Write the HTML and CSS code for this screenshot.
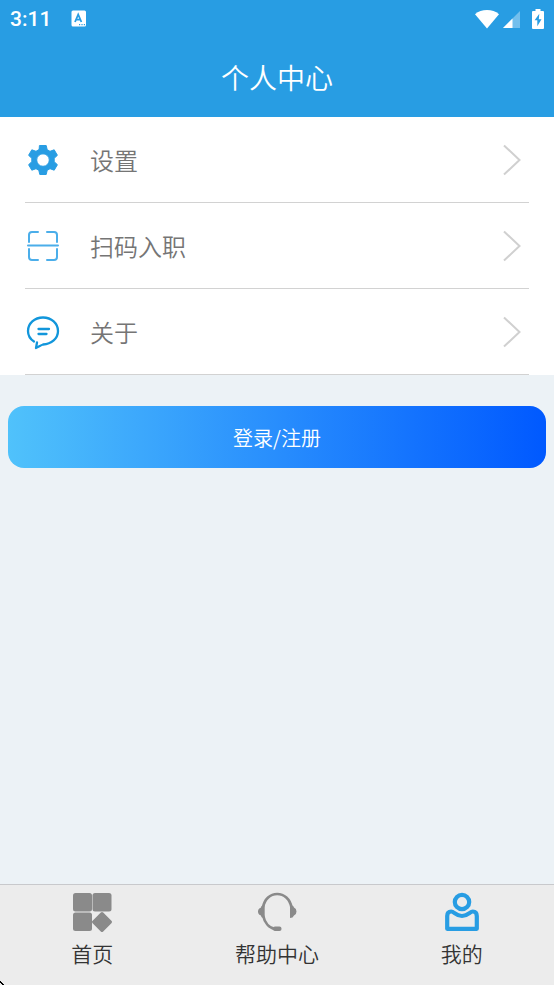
FILE: index.html
```html
<!DOCTYPE html>
<html lang="zh-CN">
<head>
<meta charset="utf-8">
<meta name="viewport" content="width=device-width, initial-scale=1">
<title>个人中心</title>
<link rel="stylesheet" href="styles.css">
</head>
<body>
<header class="header">
  <div class="status">
    <span class="clock">3:11</span>
    <svg class="status-app" width="16" height="18" viewBox="0 0 16 18" aria-hidden="true">
      <rect x="0.5" y="0.5" width="14.5" height="16" rx="1.5" fill="#fff"/>
      <path d="M4 12 7.2 4.5 10.4 12M5.2 9.6h4" fill="none" stroke="#289de3" stroke-width="1.8"/>
      <path d="M8 14.6h1.2M10.4 14.6h1.2M12.8 14.6h1.2" stroke="#289de3" stroke-width="1.2"/>
    </svg>
    <div class="status-right">
      <svg width="24" height="19" viewBox="0 0 24 19" aria-hidden="true"><path d="M0 4.2Q5 0 12 0t12 4.2L12 18.5z" fill="#fff"/></svg>
      <svg width="17" height="17" viewBox="0 0 17 17" aria-hidden="true"><path d="M17 0v17H0z" fill="#fff" opacity=".35"/><path d="M9.5 7.5V17H0z" fill="#fff"/></svg>
      <svg class="battery" width="12" height="20" viewBox="0 0 12 20" aria-hidden="true"><path d="M3.5 2V0h5v2H11q1 0 1 1v16q0 1-1 1H1q-1 0-1-1V3q0-1 1-1z" fill="#fff"/><path d="M7.3 4.800 2.600 11.300h2.700v5.900l4.200-7H6.800z" fill="#289de3"/></svg>
    </div>
  </div>
  <h1 class="title">个人中心</h1>
</header>
<main class="main">
  <nav class="menu">
    <a class="row" href="#settings">
      <svg class="row-icon" width="36" height="36" viewBox="0 0 36 36" aria-hidden="true"><path class="gear" d="M14.800 3.500h6.400l1 4.200 2.800 1.600 4.200-1.500 3.200 5.500-3.200 3v3.400l3.200 3-3.200 5.500-4.200-1.500-2.800 1.600-1 4.200h-6.400l-1-4.200-2.800-1.600-4.200 1.500-3.200-5.500 3.200-3v-3.400l-3.200-3 3.200-5.500 4.200 1.500 2.800-1.600zM18 11.700a6.300 6.300 0 1 0 0 12.600 6.300 6.300 0 0 0 0-12.600z"/></svg>
      <span class="row-label">设置</span>
      <svg class="chevron" width="20" height="32" viewBox="0 0 20 32" aria-hidden="true"><path d="M2 1.500 17.500 16 2 30.500"/></svg>
    </a>
    <a class="row" href="#scan">
      <svg class="row-icon scan" width="36" height="36" viewBox="0 0 36 36" aria-hidden="true"><path d="M4 14V7q0-3 3-3h6M22 4h7q3 0 3 3v7M4 21v8q0 3 3 3h6M22 32h7q3 0 3-3v-8M3 17.500h30"/></svg>
      <span class="row-label">扫码入职</span>
      <svg class="chevron" width="20" height="32" viewBox="0 0 20 32" aria-hidden="true"><path d="M2 1.500 17.500 16 2 30.500"/></svg>
    </a>
    <a class="row" href="#about">
      <svg class="row-icon about" width="36" height="36" viewBox="0 0 36 36" aria-hidden="true"><path d="M9 27.500C5 25 3 21.500 3 17 3 9.500 9.500 3.500 18 3.500S33 9.500 33 17 26.500 30 18 30.500c-2 .5-4.500 2.500-7 3.500l1-5.500M13.500 15H24M13.500 20h8"/></svg>
      <span class="row-label">关于</span>
      <svg class="chevron" width="20" height="32" viewBox="0 0 20 32" aria-hidden="true"><path d="M2 1.500 17.500 16 2 30.500"/></svg>
    </a>
  </nav>
  <button class="login" type="button">登录/注册</button>
</main>
<nav class="tabs">
  <a class="tab" href="#home">
    <svg width="40" height="40" viewBox="0 0 40 40" fill="#8a8a8a" aria-hidden="true"><rect x="1" y="1" width="19" height="18.500" rx="2.500"/><rect x="20.500" y="1" width="19" height="18.500" rx="2.500"/><rect x="1" y="20.500" width="19" height="18.500" rx="2.500"/><path d="M28.800 20.600q1.200-1.200 2.400 0l8.200 8.200q1.200 1.200 0 2.400l-8.200 8.200q-1.200 1.200-2.400 0l-8.200-8.200q-1.200-1.200 0-2.400z"/></svg>
    <span>首页</span>
  </a>
  <a class="tab" href="#help">
    <svg width="40" height="40" viewBox="0 0 40 40" aria-hidden="true"><path d="M34.500 15.500C33 7 27 2 20.200 2S7.500 7 6 15.500V23C7.500 30.500 12 36 18 37" fill="none" stroke="#8a8a8a" stroke-width="2.700"/><path d="M7.500 13v13q-3.500 0-3.500-2.500-3-1-3-4t3-4Q4 13 7.500 13zM33 13q3.500 0 4 2.500 2.500 1 2.500 4T37 23.500Q36 26 33 26z" fill="#8a8a8a"/><rect x="16" y="34.500" width="8.500" height="4.500" rx="2" fill="#8a8a8a"/></svg>
    <span>帮助中心</span>
  </a>
  <a class="tab" href="#mine" aria-current="page">
    <svg width="40" height="40" viewBox="0 0 40 40" fill="none" stroke="#289de3" stroke-width="4.200" aria-hidden="true"><circle cx="20" cy="10" r="7.200"/><path stroke-linejoin="round" d="M5.200 36.800V24q0-4.500 4-4.500c3 0 4.500 4.500 10.800 4.500s7.800-4.500 10.800-4.500q4 0 4 4.500v12.800z"/></svg>
    <span>我的</span>
  </a>
</nav>
<svg class="corner" width="4" height="4" viewBox="0 0 4 4" aria-hidden="true"><path d="M0 0h1v1h1v1h1v1h1v1H2V3H1V2H0z"/></svg>
</body>
</html>
```
FILE: styles.css
```css
* {
  box-sizing: border-box;
}

body {
  margin: 0;
  min-height: 100vh;
  display: flex;
  flex-direction: column;
  background: #ecf2f6;
  font-family: "Noto Sans CJK SC", sans-serif;
  font-weight: 350;
}

a {
  color: inherit;
  text-decoration: none;
}

svg {
  display: block;
  flex: none;
}

.header {
  background: #289de3;
  color: #fff;
}

.status {
  display: flex;
  align-items: center;
  height: 38px;
  padding: 0 10px;
}

.clock {
  font: 500 21px/40px Roboto, sans-serif;
}

.status-app {
  margin-left: 20px;
}

.status-right {
  display: flex;
  align-items: center;
  gap: 4px;
  margin-left: auto;
}

.battery {
  margin-left: 8px;
}

.title {
  margin: 0;
  padding-bottom: 1px;
  font-size: 28px;
  font-weight: 350;
  line-height: 78px;
  text-align: center;
}

.main {
  flex: 1;
}

.menu {
  padding: 0 25px;
  background: #fff;
}

.row {
  display: flex;
  align-items: center;
  height: 86px;
  border-bottom: 1px solid #d2d2d2;
  color: #757575;
  font-size: 24px;
}

.row-icon {
  fill: none;
  stroke-linecap: round;
  stroke-linejoin: round;
}

.gear {
  fill: #289de3;
  stroke: #289de3;
  stroke-width: 1;
}

.scan {
  stroke: #4baeea;
  stroke-width: 2;
}

.about {
  stroke: #1296db;
  stroke-width: 2.3;
}

.row-label {
  flex: 1;
  margin-left: 29px;
}

.chevron {
  margin-right: 7px;
  fill: none;
  stroke: #d0d0d0;
  stroke-width: 2;
}

.login {
  display: block;
  width: calc(100% - 16px);
  height: 62px;
  margin: 31px 8px;
  border: 0;
  border-radius: 16px;
  background: linear-gradient(90deg, #50c2fb, #0059ff);
  color: #fff;
  font-family: inherit;
  font-size: 20px;
  font-weight: inherit;
}

.tabs {
  display: flex;
  height: 101px;
  padding-top: 7px;
  border-top: 1px solid #c8c9cc;
  background: #ececec;
}

.tab {
  flex: 1;
  display: flex;
  flex-direction: column;
  align-items: center;
  color: #333;
  font-size: 21px;
  line-height: 42px;
}

.corner {
  position: absolute;
  bottom: 0;
  left: 0;
}
```
